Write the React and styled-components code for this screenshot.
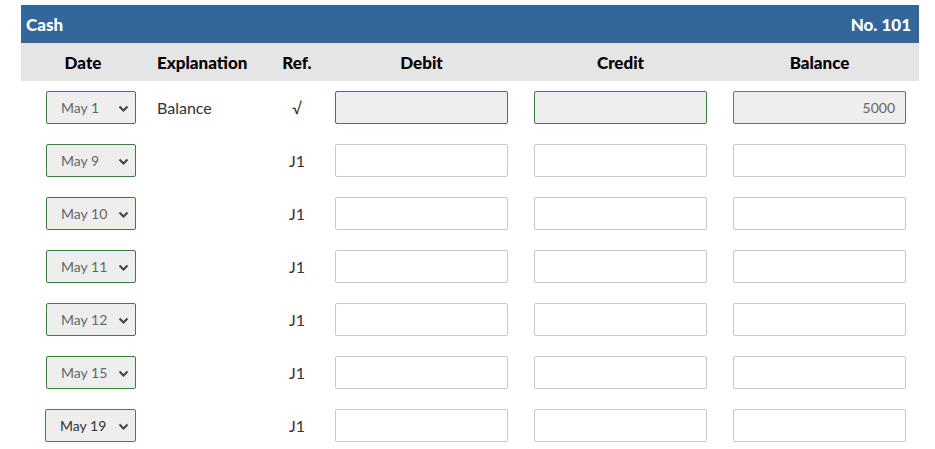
import React from 'react';
import styled, { createGlobalStyle } from 'styled-components';

const GlobalStyle = createGlobalStyle`
  body {
    margin: 0;
    background: #fff;
    font-family: Lato, "Liberation Sans", sans-serif;
  }
`;

const Wrapper = styled.div`
  width: 898px;
  padding: 5px 0 0 21px;
`;

const TitleBar = styled.div`
  display: flex;
  justify-content: space-between;
  align-items: center;
  height: 38px;
  padding: 0 8px 0 5px;
  background: #336699;
  color: #fff;
  font-weight: 900;
  font-size: 17px;
`;

const cols = '124px 127px 50px 199px 199px 199px';

const HeadRow = styled.div`
  display: grid;
  grid-template-columns: ${cols};
  height: 38px;
  align-items: center;
  background: #e5e5e5;
  font-weight: 900;
  font-size: 17px;
  color: #000;
  text-align: center;
`;

const HeadLeft = styled.div`
  text-align: left;
  padding-left: 12px;
`;

const Row = styled.div`
  display: grid;
  grid-template-columns: ${cols};
  height: 53px;
  align-items: start;
`;

const Body = styled.div`
  display: flex;
  flex-direction: column;
  padding-top: 10px;
`;

const DateCell = styled.div`
  padding-left: ${p => (p.$active ? 24 : 25)}px;
`;

const SelectBox = styled.div`
  position: relative;
  box-sizing: border-box;
  width: ${p => (p.$active ? 91 : 90)}px;
  height: 33px;
  border: 1px solid ${p => (p.$active ? '#4f7a4f' : '#3e7d3e')};
  border-radius: 2px;
  background: #eeeeee;
  display: flex;
  align-items: center;
  padding-left: 14px;
  font-size: 14px;
  color: ${p => (p.$active ? '#333' : '#666')};
`;

const Chevron = styled.svg`
  position: absolute;
  right: 6px;
  top: 13px;
`;

const Text = styled.div`
  font-size: 16px;
  color: #333;
  padding-left: ${p => (p.$left ? 12 : 0)}px;
  text-align: ${p => (p.$left ? 'left' : 'center')};
  line-height: 33px;
`;

const InputCell = styled.div`
  padding-left: 13px;
`;

const Field = styled.div`
  box-sizing: border-box;
  width: 173px;
  height: 33px;
  border: 1px solid ${p => (p.$locked ? '#3e7d3e' : '#c8c8c8')};
  border-radius: 2px;
  background: ${p => (p.$locked ? '#eeeeee' : '#fff')};
  font-size: 14px;
  color: #666;
  text-align: right;
  line-height: 31px;
  padding-right: 10px;
`;

const BalanceField = styled(Field)`
  border-color: ${p => (p.$locked ? '#5a7a5a' : '#c8c8c8')};
`;

const rows = [
  { date: 'May 1', expl: 'Balance', ref: '√', locked: true, bal: '5000' },
  { date: 'May 9', ref: 'J1' },
  { date: 'May 10', ref: 'J1' },
  { date: 'May 11', ref: 'J1' },
  { date: 'May 12', ref: 'J1' },
  { date: 'May 15', ref: 'J1' },
  { date: 'May 19', ref: 'J1', active: true },
];

const App = () => {
  return (
    <Wrapper>
      <GlobalStyle />
      <TitleBar>
        <span>Cash</span>
        <span>No. 101</span>
      </TitleBar>
      <HeadRow>
        <div>Date</div>
        <HeadLeft>Explanation</HeadLeft>
        <div>Ref.</div>
        <div>Debit</div>
        <div>Credit</div>
        <div>Balance</div>
      </HeadRow>
      <Body>
        {rows.map(r => (
          <Row key={r.date}>
            <DateCell $active={r.active}>
              <SelectBox $active={r.active}>
                {r.date}
                <Chevron width="11" height="8" viewBox="0 0 11 8">
                  <path d="M1.5 1.5 L5.5 5.5 L9.5 1.5" fill="none" stroke="#444" strokeWidth="2" />
                </Chevron>
              </SelectBox>
            </DateCell>
            <Text $left>{r.expl || ''}</Text>
            <Text>{r.ref}</Text>
            <InputCell><Field $locked={r.locked} /></InputCell>
            <InputCell><Field $locked={r.locked} /></InputCell>
            <InputCell><BalanceField $locked={r.locked}>{r.bal}</BalanceField></InputCell>
          </Row>
        ))}
      </Body>
    </Wrapper>
  );
};

export default App;
